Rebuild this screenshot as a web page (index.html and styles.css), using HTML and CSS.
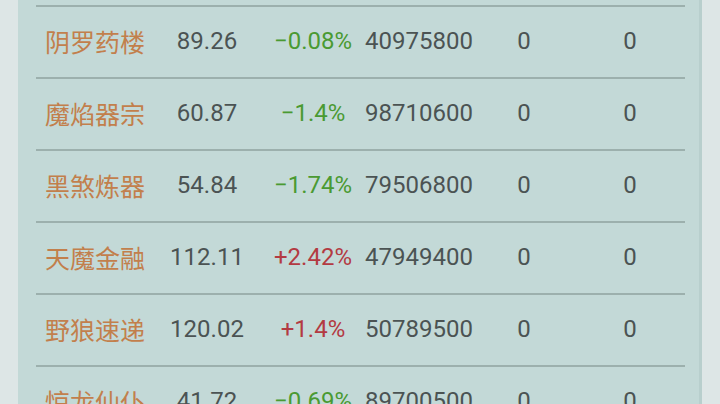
FILE: index.html
```html
<!DOCTYPE html>
<html lang="zh">
  <head>
    <meta charset="UTF-8" />
    <meta name="viewport" content="width=device-width, initial-scale=1.0" />
    <title>行情</title>
    <link rel="stylesheet" href="styles.css">
  </head>
  <body>
    <main class="panel">
      <ul class="quote-list">
        <li class="quote-row">
          <span class="name">阴罗药楼</span>
          <span>89.26</span>
          <span class="down">&minus;0.08%</span>
          <span>40975800</span>
          <span>0</span>
          <span>0</span>
        </li>
        <li class="quote-row">
          <span class="name">魔焰器宗</span>
          <span>60.87</span>
          <span class="down">&minus;1.4%</span>
          <span>98710600</span>
          <span>0</span>
          <span>0</span>
        </li>
        <li class="quote-row">
          <span class="name">黑煞炼器</span>
          <span>54.84</span>
          <span class="down">&minus;1.74%</span>
          <span>79506800</span>
          <span>0</span>
          <span>0</span>
        </li>
        <li class="quote-row">
          <span class="name">天魔金融</span>
          <span>112.11</span>
          <span class="up">+2.42%</span>
          <span>47949400</span>
          <span>0</span>
          <span>0</span>
        </li>
        <li class="quote-row">
          <span class="name">野狼速递</span>
          <span>120.02</span>
          <span class="up">+1.4%</span>
          <span>50789500</span>
          <span>0</span>
          <span>0</span>
        </li>
        <li class="quote-row">
          <span class="name">惊龙仙仆</span>
          <span>41.72</span>
          <span class="down">&minus;0.69%</span>
          <span>89700500</span>
          <span>0</span>
          <span>0</span>
        </li>
      </ul>
    </main>
  </body>
</html>
```

FILE: styles.css
```css
:root {
  --page-color: #dde6e6;
  --panel-color: #c3d9d7;
  --panel-edge: #b8cfcd;
  --line-color: #9cb0ad;
  --name-color: #c27f4c;
  --text-color: #4b5353;
  --down-color: #4a9a32;
  --up-color: #b33a42;
}

* {
  margin: 0;
  padding: 0;
  box-sizing: border-box;
}

html,
body {
  height: 100%;
  overflow: hidden;
}

body {
  font-family: Roboto, "Noto Sans CJK SC", sans-serif;
  background-color: var(--page-color);
  color: var(--text-color);
  padding: 0 18px;
}

.panel {
  background-color: var(--panel-color);
  height: 100%;
  padding: 5px 14px 0 18px;
  border-right: 3px solid var(--panel-edge);
}

.quote-list {
  list-style: none;
}

.quote-row {
  display: grid;
  grid-template-columns: 118px 106px 106px 106px 104px 108px;
  justify-items: center;
  align-items: center;
  height: 72px;
  border-top: 2px solid var(--line-color);
  font-size: 24px;
  line-height: 1;
  white-space: nowrap;
}

.quote-row span {
  padding-bottom: 2px;
}

.name {
  font-family: "Noto Sans CJK SC", sans-serif;
  font-size: 25px;
  color: var(--name-color);
}

.down {
  color: var(--down-color);
}

.up {
  color: var(--up-color);
}
```
